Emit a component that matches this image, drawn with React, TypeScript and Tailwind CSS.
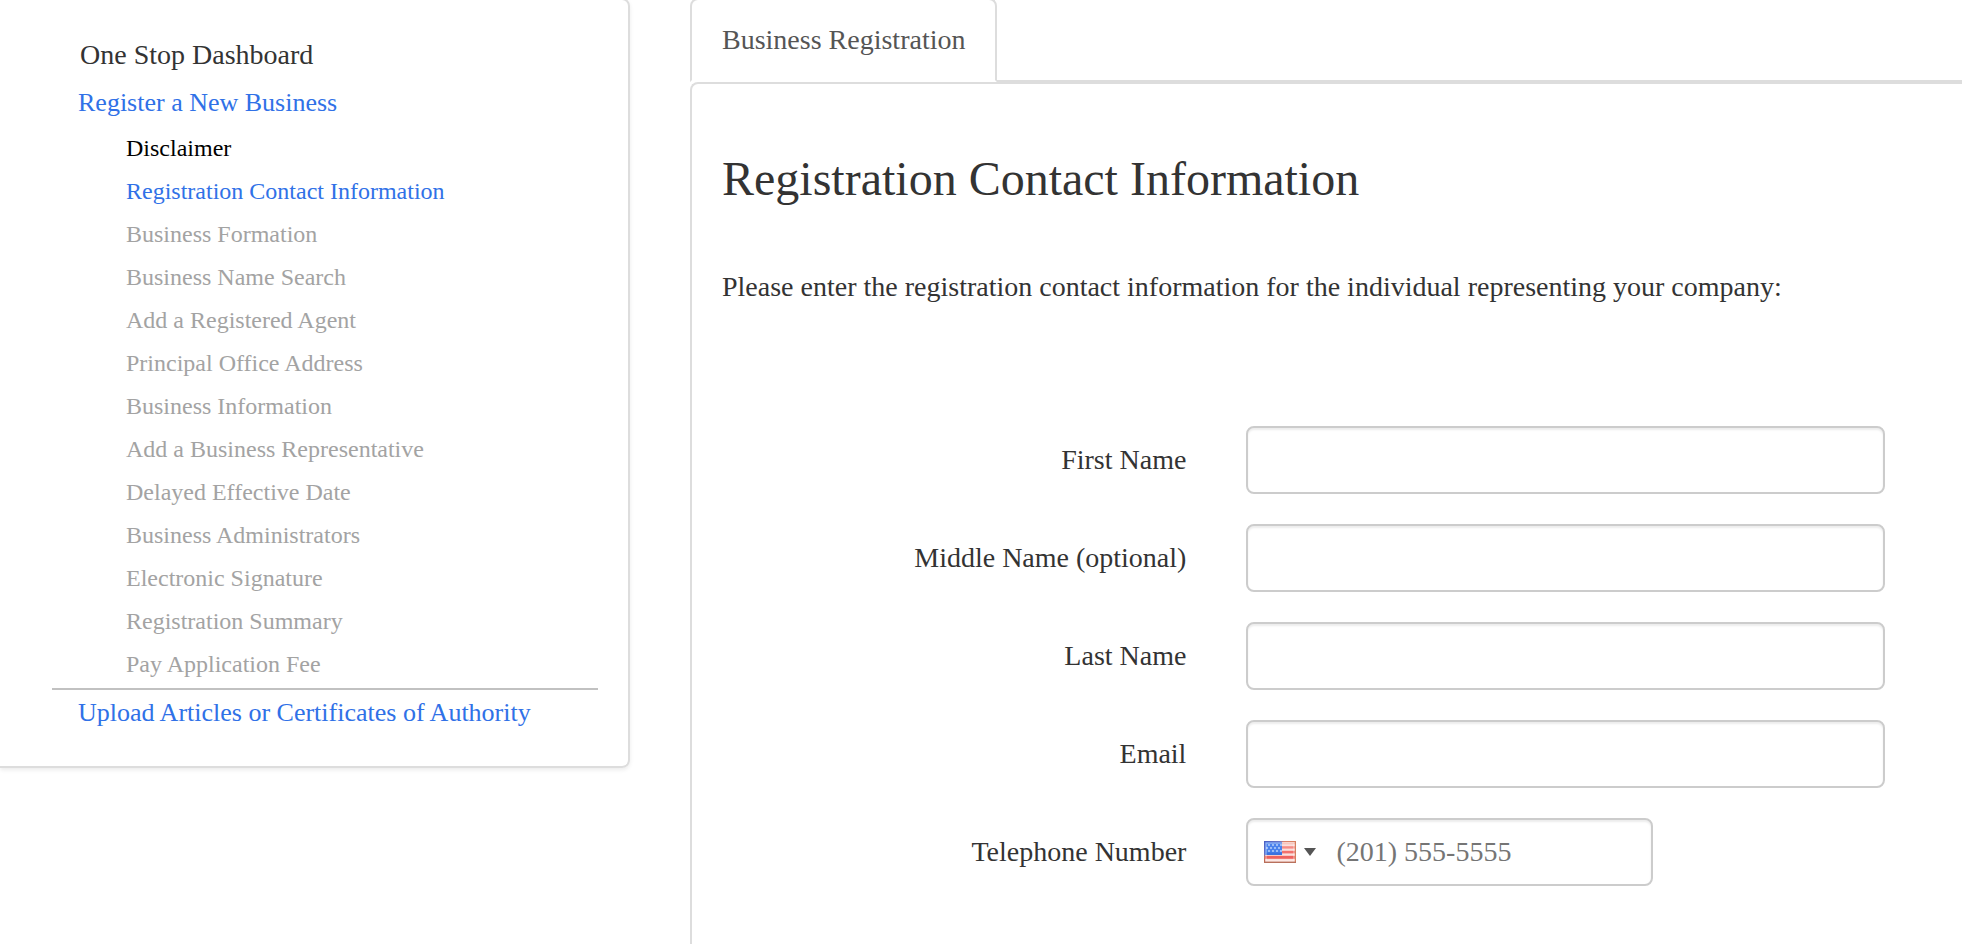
import { useState } from "react";

type Step = { label: string; state: "done" | "current" | "pending" };

const steps: Step[] = [
  { label: "Disclaimer", state: "done" },
  { label: "Registration Contact Information", state: "current" },
  { label: "Business Formation", state: "pending" },
  { label: "Business Name Search", state: "pending" },
  { label: "Add a Registered Agent", state: "pending" },
  { label: "Principal Office Address", state: "pending" },
  { label: "Business Information", state: "pending" },
  { label: "Add a Business Representative", state: "pending" },
  { label: "Delayed Effective Date", state: "pending" },
  { label: "Business Administrators", state: "pending" },
  { label: "Electronic Signature", state: "pending" },
  { label: "Registration Summary", state: "pending" },
  { label: "Pay Application Fee", state: "pending" },
];

const stepColors = {
  done: "text-black",
  current: "text-[#3071e7]",
  pending: "text-[#a3a3a3]",
};

const fields = [
  { id: "first-name", label: "First Name", type: "text" },
  { id: "middle-name", label: "Middle Name (optional)", type: "text" },
  { id: "last-name", label: "Last Name", type: "text" },
  { id: "email", label: "Email", type: "email" },
];

const inputBase =
  "h-[68px] w-full rounded-lg border-2 border-[#ccc] bg-white px-6 text-[28px] text-[#555] shadow-[inset_0_2px_2px_rgba(0,0,0,0.075)] outline-none placeholder:text-[#757575] placeholder:opacity-100 focus:border-[#66afe9]";

function UsFlag() {
  const stars = [
    [5, 4], [9, 4], [13, 4], [17, 4],
    [3, 7], [7, 7], [11, 7], [15, 7],
    [5, 10], [9, 10], [13, 10], [17, 10],
  ];
  return (
    <svg width="32" height="22" viewBox="0 0 32 22" aria-hidden="true">
      <defs>
        <linearGradient id="flag-top" x1="0" y1="0" x2="1" y2="0">
          <stop offset="0" stopColor="#4a5fc4" />
          <stop offset="0.5" stopColor="#6a74c4" />
          <stop offset="0.62" stopColor="#dd8068" />
          <stop offset="1" stopColor="#d9805f" />
        </linearGradient>
        <linearGradient id="flag-side" x1="0" y1="0" x2="0" y2="1">
          <stop offset="0" stopColor="#4a5fc4" />
          <stop offset="0.58" stopColor="#5f70c8" />
          <stop offset="0.74" stopColor="#c8705c" />
          <stop offset="1" stopColor="#b8604a" />
        </linearGradient>
      </defs>
      <rect width="32" height="22" fill="#fbe0dc" />
      <rect y="2" width="32" height="1.2" fill="#f6b0a6" />
      <rect y="5.2" width="32" height="2.4" fill="#f58c86" />
      <rect y="9.8" width="32" height="2.6" fill="#f2716c" />
      <rect y="14.8" width="32" height="3" fill="#ee625e" />
      <rect width="18" height="14" fill="#4a82ec" />
      <rect x="2" y="11.5" width="16" height="2.5" fill="#3a72e0" />
      {stars.map(([cx, cy]) => (
        <circle key={`${cx}-${cy}`} cx={cx} cy={cy} r="0.9" fill="#c3d8fb" />
      ))}
      <rect x="2" y="2" width="28" height="18" fill="none" stroke="#fff" strokeWidth="1.4" strokeOpacity="0.4" />
      <path d="M0 0H32V1.2H0Z" fill="url(#flag-top)" />
      <path d="M0 0H1.2V22H0Z" fill="url(#flag-side)" />
      <path d="M30.8 1H32V22H30.8Z" fill="#d5805f" />
      <path d="M0 20.6H32V22H0Z" fill="#b8705c" />
    </svg>
  );
}

function Sidebar() {
  return (
    <aside className="-mt-0.5 w-[630px] shrink-0 self-start rounded-r-lg border-2 border-l-0 border-[#ddd] pt-[35px] pr-[30px] pb-[30px] pl-[52px] shadow-[0_2px_4px_rgba(0,0,0,0.08)]">
      <nav aria-label="Registration steps">
        <a href="#dashboard" className="block pl-7 text-[28px] leading-[40px] text-[#333]">
          One Stop Dashboard
        </a>
        <a href="#register" className="mt-1 block pl-[26px] text-[26px] leading-[48px] text-[#3071e7]">
          Register a New Business
        </a>
        <ul className="border-b-2 border-[#c1c1c1] pb-0.5 pl-[74px]">
          {steps.map((step) => (
            <li key={step.label} className="text-[24px] leading-[43px]">
              <a
                href="#step"
                aria-current={step.state === "current" ? "step" : undefined}
                className={stepColors[step.state]}
              >
                {step.label}
              </a>
            </li>
          ))}
        </ul>
        <a href="#upload" className="block pl-[26px] text-[26px] leading-[46px] text-[#3071e7]">
          Upload Articles or Certificates of Authority
        </a>
      </nav>
    </aside>
  );
}

export default function App() {
  const [phone, setPhone] = useState("");

  return (
    <div className="flex min-h-screen gap-[60px] bg-white font-['Liberation_Serif','Times_New_Roman',serif] text-[28px] text-[#333]">
      <Sidebar />
      <main className="flex min-w-0 flex-1 flex-col">
        <div role="tablist" className="-mt-0.5 flex border-b-2 border-[#ddd]">
          <button
            type="button"
            role="tab"
            aria-selected="true"
            className="-mb-0.5 rounded-t-lg border-2 border-[#ddd] border-b-white bg-white px-[30px] py-5 leading-[40px] text-[#555]"
          >
            Business Registration
          </button>
        </div>
        <section className="flex-1 rounded-tl-lg border-t-2 border-l-2 border-[#ddd] pt-[68px] pr-[77px] pl-[30px]">
          <h1 className="text-[48px] leading-[54px]">Registration Contact Information</h1>
          <p className="mt-[60px] leading-[42px]">
            Please enter the registration contact information for the individual representing your company:
          </p>
          <form className="mt-[118px] grid grid-cols-[8fr_11fr] items-center gap-x-[60px] gap-y-[30px]">
            {fields.map((field) => (
              <div key={field.id} className="contents">
                <label htmlFor={field.id} className="text-right">
                  {field.label}
                </label>
                <input id={field.id} type={field.type} className={inputBase} />
              </div>
            ))}
            <label htmlFor="phone" className="text-right">
              Telephone Number
            </label>
            <div className="relative w-[407px]">
              <input
                id="phone"
                type="tel"
                placeholder="(201) 555-5555"
                value={phone}
                onChange={(event) => setPhone(event.target.value)}
                className={`${inputBase} pl-[88px]`}
              />
              <button
                type="button"
                aria-label="Country: United States"
                className="absolute inset-y-0 left-0 flex items-center gap-2 pl-[18px]"
              >
                <UsFlag />
                <svg width="12" height="8" viewBox="0 0 12 8" aria-hidden="true">
                  <path d="M0 0H12L6 8Z" fill="#555" />
                </svg>
              </button>
            </div>
          </form>
        </section>
      </main>
    </div>
  );
}
